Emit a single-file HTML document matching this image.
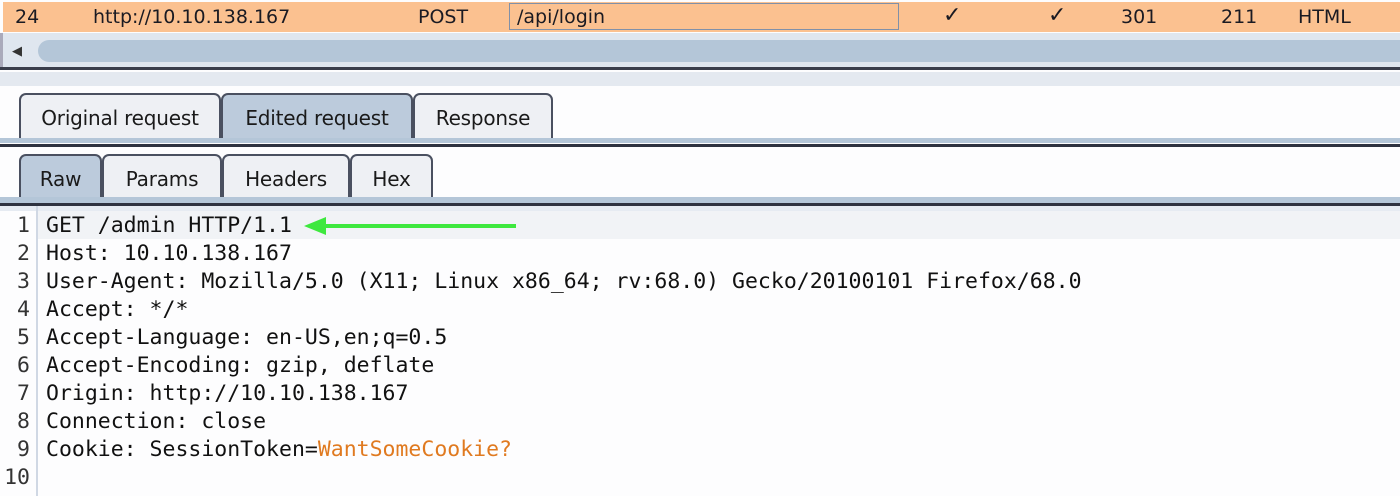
<!DOCTYPE html>
<html><head><style>
body{margin:0;width:1400px;height:496px;background:#fdfdfe;position:relative;overflow:hidden;font-family:"DejaVu Sans","Liberation Sans",sans-serif;}
.a{position:absolute}
.row{left:3px;top:2px;width:1397px;height:30px;background:#fbc190;font-size:19px;color:#1a1a22}
.row span{position:absolute;top:4px}
.tab{position:absolute;height:46px;border:2px solid #4a5060;border-bottom:none;border-radius:7px 7px 0 0;background:#eef0f4;font-size:20px;color:#1a1a1a;box-sizing:border-box;text-align:center;padding-top:11px;letter-spacing:-0.2px}
.sel{background:#bccbdc}
.code{font-family:"DejaVu Sans Mono","Liberation Mono",monospace;font-size:21.5px;color:#111}
.ln{position:absolute;left:0;width:30px;text-align:right;color:#333}
.tx{position:absolute;left:46px;white-space:pre}
</style></head><body>
<div class="a row">
<span style="left:12px">24</span><span style="left:90px">http://10.10.138.167</span><span style="left:415px">POST</span>
<div class="a" style="left:506px;top:1px;width:390px;height:27px;border:1px solid #8090a8;box-sizing:border-box"></div>
<span style="left:514px">/api/login</span><span style="left:940px;font-size:22px;top:1px">✓</span><span style="left:1045px;font-size:22px;top:1px">✓</span><span style="left:1118px">301</span><span style="left:1218px">211</span><span style="left:1295px">HTML</span>
</div>
<div class="a" style="left:0;top:33px;width:1400px;height:36px;background:#dfe6ef;border-left:3px solid #aab"></div>
<div class="a" style="left:38px;top:40px;width:1362px;height:22px;background:#b4c6d8;border-radius:14px 0 0 14px"></div>
<div class="a" style="left:12px;top:44px;font-size:13px;color:#333">◀</div>
<div class="a" style="left:0;top:67px;width:1400px;height:3px;background:#3a3e4c"></div>
<div class="a" style="left:0;top:72px;width:1400px;height:14px;background:#e4e9f0"></div>
<div class="tab" style="left:19px;top:93px;width:202px">Original request</div>
<div class="tab sel" style="left:221px;top:93px;width:192px">Edited request</div>
<div class="tab" style="left:413px;top:93px;width:140px">Response</div>
<div class="a" style="left:0;top:138px;width:1400px;height:5px;background:#b4c6d8"></div>
<div class="a" style="left:0;top:144px;width:1400px;height:3px;background:#2e3240"></div>
<div class="tab sel" style="left:19px;top:154px;width:83px">Raw</div>
<div class="tab" style="left:102px;top:154px;width:120px">Params</div>
<div class="tab" style="left:222px;top:154px;width:128px">Headers</div>
<div class="tab" style="left:350px;top:154px;width:83px">Hex</div>
<div class="a" style="left:0;top:197px;width:1400px;height:6px;background:#b4c6d8"></div>
<div class="a" style="left:0;top:203px;width:1400px;height:3px;background:#2e3240"></div>
<div class="a" style="left:0;top:206px;width:1400px;height:5px;background:#e6ebf2"></div>
<div class="a" style="left:37px;top:211px;width:1363px;height:28px;background:#f1f3f6"></div>
<div class="a" style="left:36px;top:206px;width:2px;height:290px;background:#d0d8e4"></div>
<div class="a code" style="left:0;top:211px;width:1400px;height:285px">
<div class="ln" style="top:2px">1</div><div class="tx" style="top:2px">GET /admin HTTP/1.1</div>
<div class="ln" style="top:30px">2</div><div class="tx" style="top:30px">Host: 10.10.138.167</div>
<div class="ln" style="top:58px">3</div><div class="tx" style="top:58px">User-Agent: Mozilla/5.0 (X11; Linux x86_64; rv:68.0) Gecko/20100101 Firefox/68.0</div>
<div class="ln" style="top:86px">4</div><div class="tx" style="top:86px">Accept: */*</div>
<div class="ln" style="top:114px">5</div><div class="tx" style="top:114px">Accept-Language: en-US,en;q=0.5</div>
<div class="ln" style="top:142px">6</div><div class="tx" style="top:142px">Accept-Encoding: gzip, deflate</div>
<div class="ln" style="top:170px">7</div><div class="tx" style="top:170px">Origin: http://10.10.138.167</div>
<div class="ln" style="top:198px">8</div><div class="tx" style="top:198px">Connection: close</div>
<div class="ln" style="top:226px">9</div><div class="tx" style="top:226px">Cookie: SessionToken=<span style="color:#e07a20">WantSomeCookie?</span></div>
<div class="ln" style="top:254px">10</div>
</div>
<svg class="a" style="left:300px;top:214px" width="220" height="24"><line x1="20" y1="12" x2="216" y2="12" stroke="#3ee83e" stroke-width="4"/><polygon points="4,12 26,3 26,21" fill="#3ee83e"/></svg>
</body></html>
